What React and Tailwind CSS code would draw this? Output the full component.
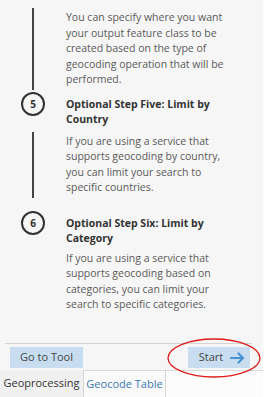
import React from 'react';

const font = { fontFamily: '"Open Sans", Lato, "Liberation Sans", sans-serif' };

const Circle = ({ n }) => (
  <div className="w-[24px] h-[24px] rounded-full border-2 border-[#333] flex items-center justify-center text-[10px] font-bold text-[#333] leading-none">
    {n}
  </div>
);

const TextRow = ({ lines, withLine = true, className = '' }) => (
  <div className={`flex ${className}`}>
    <div className="w-[66px] shrink-0 flex justify-center">
      {withLine && <div className="w-[2px] bg-[#444] mr-[1px]" />}
    </div>
    <p className="text-[10.5px] leading-[15.5px] text-[#5a5a5a] whitespace-nowrap py-[2px]">
      {lines.map((l, i) => (
        <span key={i} className="block">{l}</span>
      ))}
    </p>
  </div>
);

const HeadRow = ({ n, lines, className = '' }) => (
  <div className={`flex items-start ${className}`}>
    <div className="w-[66px] shrink-0 flex justify-center">
      <Circle n={n} />
    </div>
    <h3 className="text-[10.5px] leading-[15.5px] font-bold text-[#333] whitespace-nowrap mt-[5px]">
      {lines.map((l, i) => (
        <span key={i} className="block">{l}</span>
      ))}
    </h3>
  </div>
);

export default function App() {
  return (
    <div className="w-[268px] h-[397px] bg-white overflow-hidden flex" style={font}>
      <div className="w-[263px] h-full flex flex-col bg-[#f6f6f6] relative">
        {/* steps */}
        <div className="flex-1 pt-[8px]">
          <TextRow
            lines={[
              'You can specify where you want',
              'your output feature class to be',
              'created based on the type of',
              'geocoding operation that will be',
              'performed.',
            ]}
          />
          <HeadRow n="5" lines={['Optional Step Five: Limit by', 'Country']} className="mt-[2px]" />
          <TextRow
            className="mt-[4px]"
            lines={[
              'If you are using a service that',
              'supports geocoding by country,',
              'you can limit your search to',
              'specific countries.',
            ]}
          />
          <HeadRow n="6" lines={['Optional Step Six: Limit by', 'Category']} className="mt-[13px]" />
          <TextRow
            className="mt-[2px]"
            withLine={false}
            lines={[
              'If you are using a service that',
              'supports geocoding based on',
              'categories, you can limit your',
              'search to specific categories.',
            ]}
          />
        </div>

        {/* footer buttons */}
        <div className="ml-[5px] w-[247px] border-t border-[#d4d4d4] pt-[3px] pb-[2px] flex justify-between items-center">
          <button className="w-[73px] h-[21px] ml-[5px] bg-[#c8ddf0] text-[11px] text-[#444] whitespace-nowrap flex items-center justify-center">
            Go to Tool
          </button>
          <button className="w-[62px] h-[21px] mr-[2px] bg-[#c8ddf0] text-[11px] text-[#444] whitespace-nowrap flex items-center justify-center gap-[7px] pl-[6px]">
            Start
            <svg width="15" height="12" viewBox="0 0 15 12" fill="none">
              <path d="M1 6h12M8.5 1.5l4.5 4.5-4.5 4.5" stroke="#4a92d4" strokeWidth="2.2" strokeLinecap="round" strokeLinejoin="round" />
            </svg>
          </button>
        </div>

        {/* tabs */}
        <div className="h-[27px] flex bg-[#fcfcfc] border-t border-[#dadada]">
          <div className="w-[83px] bg-[#f0f0f0] text-[11px] text-[#333] whitespace-nowrap flex items-center justify-center mt-[-1px]">
            Geoprocessing
          </div>
          <div className="w-[83px] bg-[#fafafa] border-x border-[#d6d6d6] text-[11px] text-[#3b78b2] whitespace-nowrap flex items-center justify-center">
            Geocode Table
          </div>
        </div>

        {/* annotation ellipse */}
        <svg className="absolute left-0 top-0 pointer-events-none" width="268" height="397">
          <ellipse cx="214" cy="358" rx="46" ry="19" fill="none" stroke="#e01b1b" strokeWidth="1.3" />
        </svg>
      </div>
    </div>
  );
}
